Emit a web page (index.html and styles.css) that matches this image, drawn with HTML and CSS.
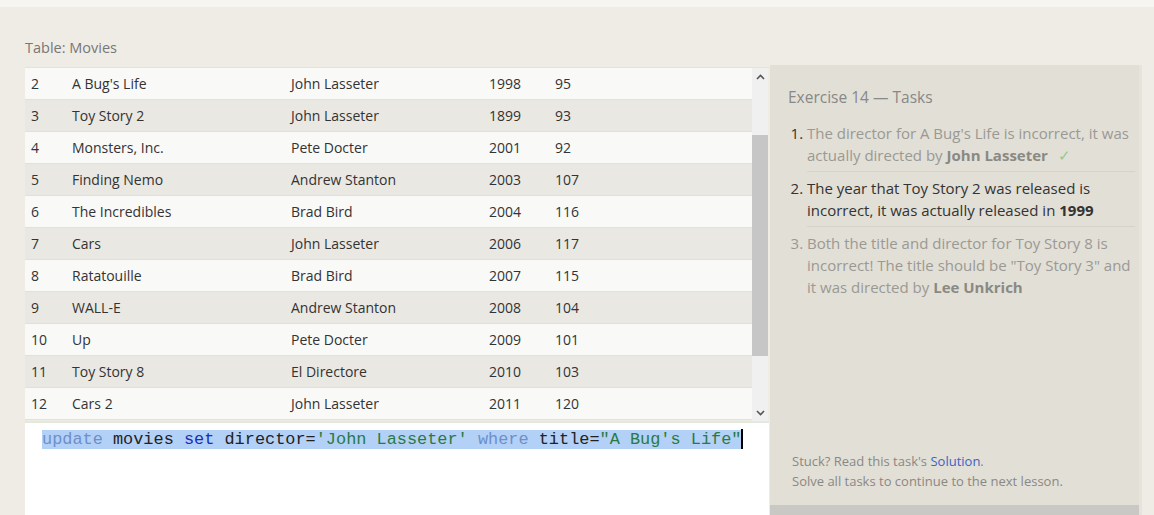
FILE: index.html
```html
<!DOCTYPE html>
<html>
<head>
<meta charset="utf-8">
<link rel="stylesheet" href="styles.css">
</head>
<body>
<div class="topstrip"></div>
<div class="page">
  <div class="left">
    <div class="caption">Table: Movies</div>
    <div class="tablebox">
      <div class="rows">
        <div class="row"><span class="c-id">2</span><span class="c-title">A Bug's Life</span><span class="c-dir">John Lasseter</span><span class="c-year">1998</span><span class="c-len">95</span></div>
        <div class="row alt"><span class="c-id">3</span><span class="c-title">Toy Story 2</span><span class="c-dir">John Lasseter</span><span class="c-year">1899</span><span class="c-len">93</span></div>
        <div class="row"><span class="c-id">4</span><span class="c-title">Monsters, Inc.</span><span class="c-dir">Pete Docter</span><span class="c-year">2001</span><span class="c-len">92</span></div>
        <div class="row alt"><span class="c-id">5</span><span class="c-title">Finding Nemo</span><span class="c-dir">Andrew Stanton</span><span class="c-year">2003</span><span class="c-len">107</span></div>
        <div class="row"><span class="c-id">6</span><span class="c-title">The Incredibles</span><span class="c-dir">Brad Bird</span><span class="c-year">2004</span><span class="c-len">116</span></div>
        <div class="row alt"><span class="c-id">7</span><span class="c-title">Cars</span><span class="c-dir">John Lasseter</span><span class="c-year">2006</span><span class="c-len">117</span></div>
        <div class="row"><span class="c-id">8</span><span class="c-title">Ratatouille</span><span class="c-dir">Brad Bird</span><span class="c-year">2007</span><span class="c-len">115</span></div>
        <div class="row alt"><span class="c-id">9</span><span class="c-title">WALL-E</span><span class="c-dir">Andrew Stanton</span><span class="c-year">2008</span><span class="c-len">104</span></div>
        <div class="row"><span class="c-id">10</span><span class="c-title">Up</span><span class="c-dir">Pete Docter</span><span class="c-year">2009</span><span class="c-len">101</span></div>
        <div class="row alt"><span class="c-id">11</span><span class="c-title">Toy Story 8</span><span class="c-dir">El Directore</span><span class="c-year">2010</span><span class="c-len">103</span></div>
        <div class="row"><span class="c-id">12</span><span class="c-title">Cars 2</span><span class="c-dir">John Lasseter</span><span class="c-year">2011</span><span class="c-len">120</span></div>
      </div>
      <div class="scrollbar">
        <div class="arrow up"><svg width="9" height="6" viewBox="0 0 9 6"><path d="M1 5 L4.5 1.5 L8 5" fill="none" stroke="#555" stroke-width="1.6"/></svg></div>
        <div class="track"><div class="thumb"></div></div>
        <div class="arrow down"><svg width="9" height="6" viewBox="0 0 9 6"><path d="M1 1 L4.5 4.5 L8 1" fill="none" stroke="#555" stroke-width="1.6"/></svg></div>
      </div>
    </div>
    <div class="editor">
      <div class="code"><span class="sel"><span class="kw">update</span> movies <span class="kw2">set</span> director=<span class="str">'John Lasseter'</span> <span class="kw">where</span> title=<span class="str">"A Bug's Life"</span></span><span class="cursor"></span></div>
    </div>
  </div>
  <div class="panel">
    <div class="panel-body">
      <h2 class="ptitle">Exercise 14 — Tasks</h2>
      <ol class="tasks">
        <li class="done">The director for A Bug's Life is incorrect, it was actually directed by <b>John Lasseter</b> <span class="check">✓</span></li>
        <li class="active">The year that Toy Story 2 was released is incorrect, it was actually released in <b>1999</b></li>
        <li class="todo">Both the title and director for Toy Story 8 is incorrect! The title should be "Toy Story 3" and it was directed by <b>Lee Unkrich</b></li>
      </ol>
      <div class="spacer"></div>
      <div class="help">
        <div>Stuck? Read this task's <a class="link">Solution</a>.</div>
        <div>Solve all tasks to continue to the next lesson.</div>
      </div>
    </div>
    <div class="panel-foot"></div>
  </div>
</div>
</body>
</html>
```
FILE: styles.css
```css
* { box-sizing: border-box; }
html, body { margin: 0; padding: 0; }
body {
  background: #efece5;
  font-family: "Open Sans", "Noto Sans", sans-serif;
  color: #333;
  width: 1154px;
  height: 515px;
  overflow: hidden;
}
.topstrip {
  height: 7px;
  background: #f7f5f1;
}
.page {
  display: flex;
  padding-left: 25px;
  height: 508px;
}
.left {
  width: 744px;
  display: flex;
  flex-direction: column;
}
.caption {
  font-size: 14.5px;
  color: #777;
  padding-top: 32px;
  height: 60px;
  line-height: 18px;
}
.tablebox {
  display: flex;
  height: 354px;
  border-top: 1px solid #e4e2dc;
}
.rows {
  width: 727px;
  display: flex;
  flex-direction: column;
}
.row {
  display: flex;
  align-items: center;
  height: 32px;
  border-bottom: 1px solid #e2e0da;
  background: #f9f9f8;
  font-size: 14px;
  color: #333;
}
.row.alt { background: #eae8e2; }
.c-id { width: 47px; padding-left: 6px; }
.c-title { width: 219px; }
.c-dir { width: 198px; }
.c-year { width: 66px; }
.c-len { width: 60px; }
.scrollbar {
  width: 16px;
  background: #f0f0f0;
  display: flex;
  flex-direction: column;
}
.arrow {
  height: 17px;
  display: flex;
  align-items: center;
  justify-content: center;
}
.track {
  flex: 1;
  padding-top: 50px;
  padding-bottom: 48px;
}
.thumb {
  height: 100%;
  background: #c6c6c6;
}
.editor {
  flex: 1;
  background: #fff;
  border-top: 2px solid #e4e9de;
  padding: 6px 0 0 17px;
}
.code {
  font-family: "Liberation Mono", "Courier New", monospace;
  font-size: 16.9px;
  line-height: 19px;
  white-space: pre;
  color: #222;
  display: flex;
  align-items: center;
}
.sel { background: #b3d1f7; }
.kw { color: #6e8fc9; }
.kw2 { color: #1b2fb5; }
.str { color: #2a7a43; }
.cursor {
  display: inline-block;
  width: 2px;
  height: 20px;
  background: #000;
}
.panel {
  width: 372px;
  margin-left: 1px;
  margin-top: 58px;
  display: flex;
  flex-direction: column;
  border-right: 3px solid #e6e3dc;
}
.panel-body {
  flex: 1;
  background: #e2dfd6;
  padding: 21px 4px 14px 18px;
  display: flex;
  flex-direction: column;
}
.panel-foot {
  height: 10px;
  background: #c9c8c5;
}
.ptitle {
  margin: 0;
  font-weight: normal;
  font-size: 15.5px;
  line-height: 22px;
  color: #888;
}
.tasks {
  margin: 14px 0 0 0;
  padding: 0 0 0 19px;
  font-size: 15px;
  line-height: 22px;
}
.tasks li {
  padding: 0 0 5px 0;
  margin-bottom: 5px;
  border-bottom: 1px solid #d6d3ca;
}
.tasks li:last-child { border-bottom: none; }
.tasks li::marker { color: #333; }
.tasks .done { color: #9a9994; }
.tasks .done b { color: #8a8984; }
.tasks .active { color: #333; }
.tasks .todo { color: #9a9994; }
.tasks .todo::marker { color: #9a9994; }
.tasks .todo b { color: #8a8984; }
.check { color: #8fcb8f; margin-left: 6px; }
.spacer { flex: 1; }
.help {
  font-size: 13px;
  line-height: 20px;
  color: #8a8884;
  padding-left: 4px;
}
.link { color: #3a63c4; }
```
